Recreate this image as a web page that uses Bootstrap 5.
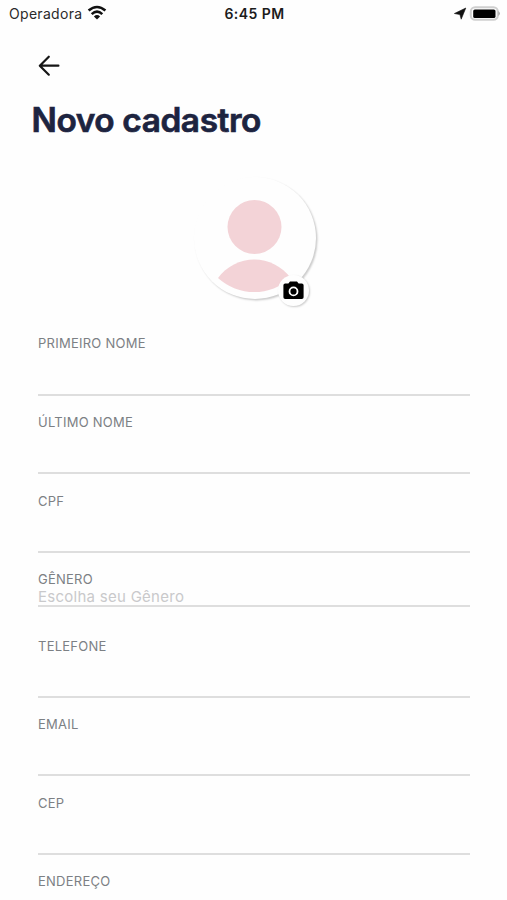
<!DOCTYPE html>
<html lang="pt-BR">
<head>
<meta charset="utf-8">
<meta name="viewport" content="width=device-width, initial-scale=1">
<title>Novo cadastro</title>
<link href="https://cdn.jsdelivr.net/npm/bootstrap@5.3.0/dist/css/bootstrap.min.css" rel="stylesheet">
<style>
  body { font-family: Inter, "Liberation Sans", sans-serif; background: #fefefe; }
  .screen { height: 900px; }
  svg { display: block; }
  .status-bar { height: 28px; padding: 0 7px 0 9px; font-size: 14px; line-height: 28px; color: #1c1c1c; }
  .status-side { flex: 1 1 0; }
  .carrier { letter-spacing: .3px; color: #2a2a2a; }
  .wifi { margin: -2px 0 0 5px; }
  .clock { font-size: 14px; letter-spacing: .45px; }
  .back-btn { margin: 27px 0 0 38px; width: 22px; height: 22px; }
  .page-title { margin: 22px 0 0 31.5px; font-size: 33.4px; line-height: 42px; letter-spacing: -.4px; color: #1d2440; -webkit-text-stroke: .7px #1d2440; }
  .avatar { width: 122px; height: 122px; margin-top: 36px; background: #fefefe; box-shadow: 1.5px 1.5px 2px rgba(0,0,0,.2); left: 1px; }
  .camera-badge { right: 7px; bottom: -7px; width: 31px; height: 31px; background: #fefefe; box-shadow: 1px 1px 2px rgba(0,0,0,.2); }
  .fields { padding: 34.4px 37px 0 38px; }
  .field { height: 62.2px; margin-bottom: 16.45px; border-bottom: 2px solid #dedede; }
  .field label { font-size: 13px; line-height: 20px; letter-spacing: .25px; color: #7c8084; }
  .field-select { height: 37.8px; margin-bottom: 28.5px; }
  .field-select label { line-height: 20px; }
  .choice { font-size: 15px; line-height: 16px; letter-spacing: .27px; color: #c9c9cb; }
</style>
</head>
<body>
<main class="screen overflow-hidden">
  <header class="status-bar d-flex align-items-center">
    <div class="status-side d-flex align-items-center">
      <span class="carrier">Operadora</span>
      <svg class="wifi" width="20" height="16" viewBox="0 0 20 16" fill="none" stroke="#111" stroke-width="2.6">
        <path d="M1.6 5.6Q10-1.6 18.4 5.6"/><path d="M4.7 9.1Q10 4.3 15.3 9.1"/>
        <path d="M6.9 11.4Q10 8.8 13.1 11.4L10 14.5z" fill="#111" stroke="none"/>
      </svg>
    </div>
    <span class="clock fw-semibold">6:45 PM</span>
    <div class="status-side d-flex align-items-center justify-content-end">
      <svg width="47" height="16" viewBox="0 0 47 16">
        <path d="M12.8 2L8.2 13.2 6.9 8.6 1.4 7.5z" fill="#111" stroke="#111" stroke-width=".6"/>
        <rect x="17.8" y="1.2" width="27" height="12.6" rx="4.3" fill="#fefefe" stroke="#cfcfcf" stroke-width="2"/>
        <rect x="20.2" y="3.5" width="22.3" height="8.5" rx="1.6" fill="#000"/>
        <path d="M45.3 5.1Q48.5 7.5 45.3 9.9z" fill="#aaa"/>
      </svg>
    </div>
  </header>

  <a class="back-btn d-block" href="#" aria-label="Voltar">
    <svg width="22" height="22" viewBox="0 0 22 22" fill="none" stroke="#161616" stroke-width="2.2" stroke-linecap="round" stroke-linejoin="round"><path d="M20.4 10.7H2M10.8 1.7L1.8 10.7l9 9"/></svg>
  </a>

  <h1 class="page-title fw-semibold">Novo cadastro</h1>

  <div class="avatar position-relative rounded-circle mx-auto">
    <svg width="122" height="122" viewBox="0 0 122 122" fill="#f3d3d7">
      <circle cx="60.5" cy="50" r="27"/>
      <path d="M24 101A45 45 0 0 1 96.6 101A54 54 0 0 1 24 101z"/>
    </svg>
    <button class="camera-badge btn position-absolute rounded-circle p-0 border-0 d-flex align-items-center justify-content-center" type="button" aria-label="Escolher foto">
      <svg width="21" height="19" viewBox="0 0 21 19"><path d="M7 0.5h7l1.6 2h3.2a1.8 1.8 0 0 1 1.8 1.8v12a1.8 1.8 0 0 1-1.8 1.8H2.2a1.8 1.8 0 0 1-1.8-1.8v-12a1.8 1.8 0 0 1 1.8-1.8h3.2z"/><circle cx="10.5" cy="10.4" r="4" fill="none" stroke="#fff" stroke-width="1.8"/></svg>
    </button>
  </div>

  <form class="fields">
    <div class="field"><label class="d-block">PRIMEIRO NOME</label></div>
    <div class="field"><label class="d-block">ÚLTIMO NOME</label></div>
    <div class="field"><label class="d-block">CPF</label></div>
    <div class="field field-select"><label class="d-block">GÊNERO</label><div class="choice">Escolha seu Gênero</div></div>
    <div class="field"><label class="d-block">TELEFONE</label></div>
    <div class="field"><label class="d-block">EMAIL</label></div>
    <div class="field"><label class="d-block">CEP</label></div>
    <div class="field"><label class="d-block">ENDEREÇO</label></div>
  </form>
</main>
<script src="https://cdn.jsdelivr.net/npm/bootstrap@5.3.0/dist/js/bootstrap.bundle.min.js"></script>
</body>
</html>
